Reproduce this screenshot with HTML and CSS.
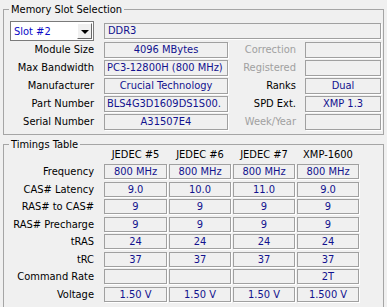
FILE: index.html
```html
<!DOCTYPE html>
<html lang="en">
<head>
    <meta charset="UTF-8">
    <title>SPD</title>
    <link rel="stylesheet" href="styles.css">
</head>
<body>
    <fieldset class="group slot-group">
        <legend>Memory Slot Selection</legend>
        <div class="spd-grid">
            <div class="slot-select">
                <span class="slot-text">Slot #2</span>
                <span class="slot-arrow"></span>
            </div>
            <div class="field wide left">DDR3</div>

            <div class="label">Module Size</div>
            <div class="field">4096 MBytes</div>
            <div class="label side dim">Correction</div>
            <div class="field"></div>

            <div class="label">Max Bandwidth</div>
            <div class="field left">PC3-12800H (800 MHz)</div>
            <div class="label side dim">Registered</div>
            <div class="field"></div>

            <div class="label">Manufacturer</div>
            <div class="field">Crucial Technology</div>
            <div class="label side">Ranks</div>
            <div class="field">Dual</div>

            <div class="label">Part Number</div>
            <div class="field left">BLS4G3D1609DS1S00.</div>
            <div class="label side">SPD Ext.</div>
            <div class="field">XMP 1.3</div>

            <div class="label">Serial Number</div>
            <div class="field">A31507E4</div>
            <div class="label side dim">Week/Year</div>
            <div class="field"></div>
        </div>
    </fieldset>

    <fieldset class="group timing-group">
        <legend>Timings Table</legend>
        <div class="timing-grid">
            <div></div>
            <div class="head">JEDEC #5</div>
            <div class="head">JEDEC #6</div>
            <div class="head">JEDEC #7</div>
            <div class="head">XMP-1600</div>

            <div class="label">Frequency</div>
            <div class="field">800 MHz</div>
            <div class="field">800 MHz</div>
            <div class="field">800 MHz</div>
            <div class="field">800 MHz</div>

            <div class="label">CAS# Latency</div>
            <div class="field">9.0</div>
            <div class="field">10.0</div>
            <div class="field">11.0</div>
            <div class="field">9.0</div>

            <div class="label">RAS# to CAS#</div>
            <div class="field">9</div>
            <div class="field">9</div>
            <div class="field">9</div>
            <div class="field">9</div>

            <div class="label">RAS# Precharge</div>
            <div class="field">9</div>
            <div class="field">9</div>
            <div class="field">9</div>
            <div class="field">9</div>

            <div class="label">tRAS</div>
            <div class="field">24</div>
            <div class="field">24</div>
            <div class="field">24</div>
            <div class="field">24</div>

            <div class="label">tRC</div>
            <div class="field">37</div>
            <div class="field">37</div>
            <div class="field">37</div>
            <div class="field">37</div>

            <div class="label">Command Rate</div>
            <div class="field"></div>
            <div class="field"></div>
            <div class="field"></div>
            <div class="field">2T</div>

            <div class="label">Voltage</div>
            <div class="field">1.50 V</div>
            <div class="field">1.50 V</div>
            <div class="field">1.50 V</div>
            <div class="field">1.500 V</div>
        </div>
    </fieldset>
</body>
</html>
```

FILE: styles.css
```css
* {
    box-sizing: border-box;
}

body {
    margin: 0;
    width: 387px;
    height: 307px;
    overflow: hidden;
    background-color: #f0f0f0;
    color: #000;
    font-family: "DejaVu Sans Condensed", "DejaVu Sans", sans-serif;
    font-size: 11px;
}

.group {
    margin: 3px 3px 0;
    border: 1px solid #a5a5a5;
    min-width: 0;
}

.group legend {
    padding: 0 2px;
    line-height: 13px;
    height: 13px;
}

.slot-group {
    padding: 5px 2px 4px 5px;
}

.timing-group {
    padding: 0 2px 10px 5px;
}

.spd-grid {
    display: grid;
    grid-template-columns: 95px 124px 77px 76px;
    grid-template-rows: 19px repeat(5, 16px);
    row-gap: 2px;
}

.field {
    height: 16px;
    border: 1px solid #a0a0a0;
    box-shadow: 1px 1px 0 #fff;
    color: #12128e;
    line-height: 14px;
    text-align: center;
    white-space: nowrap;
    overflow: hidden;
}

.field.left {
    text-align: left;
    padding-left: 2px;
}

.field.wide {
    grid-column: 2 / 5;
    margin-top: 2px;
    padding-left: 3px;
}

.label {
    line-height: 16px;
    text-align: right;
    padding-right: 10px;
    white-space: nowrap;
}

.label.side {
    padding-right: 9px;
}

.label.dim {
    color: #a0a0a0;
}

.slot-select {
    width: 84px;
    height: 20px;
    margin-left: 1px;
    background-color: #fff;
    border: 1px solid #7a7a7a;
    display: flex;
    align-items: center;
    justify-content: space-between;
    padding: 1px;
}

.slot-text {
    color: #0a0ac8;
    padding-left: 2px;
}

.slot-arrow {
    width: 15px;
    height: 16px;
    background-color: #f0f0f0;
    border: 1px solid;
    border-color: #fff #696969 #696969 #fff;
    display: flex;
    align-items: center;
    justify-content: center;
}

.slot-arrow::after {
    content: "";
    border-left: 4px solid transparent;
    border-right: 4px solid transparent;
    border-top: 4px solid #000;
    margin-top: 1px;
}

.timing-grid {
    display: grid;
    grid-template-columns: 93px 63px 62px 62px 62px;
    grid-template-rows: 10.5px repeat(8, 15px);
    column-gap: 2px;
    row-gap: 2.57px;
}

.timing-grid .field {
    height: 15px;
    line-height: 13px;
}

.timing-grid .label {
    line-height: 15px;
    padding-right: 8px;
}

.head {
    text-align: center;
    line-height: 11px;
    margin-top: -2px;
    white-space: nowrap;
}
```
